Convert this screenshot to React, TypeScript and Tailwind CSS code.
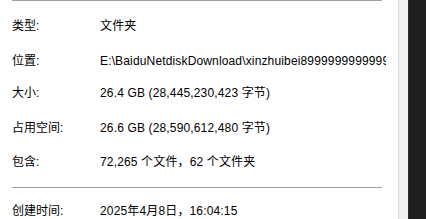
const rows1 = [
  { label: '类型:', value: '文件夹', mt: 'mt-[15px]' },
  { label: '位置:', value: 'E:\\BaiduNetdiskDownload\\xinzhuibei89999999999999999', mt: 'mt-[15px]' },
  { label: '大小:', value: '26.4 GB (28,445,230,423 字节)', mt: 'mt-[12px]' },
  { label: '占用空间:', value: '26.6 GB (28,590,612,480 字节)', mt: 'mt-[15px]' },
  { label: '包含:', value: '72,265 个文件，62 个文件夹', mt: 'mt-[14px]' },
]

function Row({ label, value, mt }: { label: string; value: string; mt: string }) {
  return (
    <div className={`flex h-[20px] items-center ${mt}`}>
      <div className="w-[88px] shrink-0">{label}</div>
      <div className="w-[286px] overflow-hidden whitespace-nowrap tracking-[0.15px]">{value}</div>
    </div>
  )
}

export default function App() {
  return (
    <div
      className="flex h-[219px] w-[426px] overflow-hidden text-[12px] text-[#000]"
      style={{ fontFamily: '"Liberation Sans", "Noto Sans CJK SC", sans-serif' }}
    >
      <div className="w-[398px] shrink-0 bg-white pl-[12px]">
        <div className="h-px w-[370px] bg-[#a0a0a0]" />
        {rows1.map((r) => (
          <Row key={r.label} {...r} />
        ))}
        <div className="mt-[15px] h-px w-[370px] bg-[#a0a0a0]" />
        <Row label="创建时间:" value="2025年4月8日，16:04:15" mt="mt-[13px]" />
      </div>
      <div className="w-[10px] shrink-0 border-l border-[#dadada] bg-[#f0f0f0]" />
      <div className="flex-1 border-l border-[#2b2b2b] bg-[#1f1f1f]" />
    </div>
  )
}
